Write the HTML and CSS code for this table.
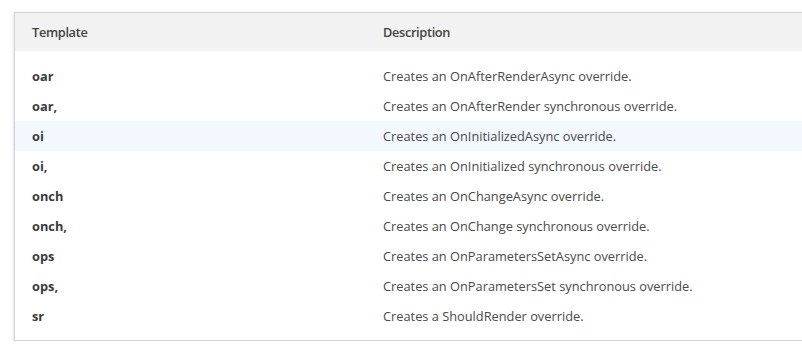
FILE: index.html
```html
<!DOCTYPE html>
<html>
<head>
<meta charset="utf-8">
<link rel="stylesheet" href="styles.css">
</head>
<body>
<div class="card">
  <div class="row head">
    <div class="cell">Template</div>
    <div class="cell">Description</div>
  </div>
  <div class="body">
    <div class="row"><div class="cell key">oar</div><div class="cell">Creates an OnAfterRenderAsync override.</div></div>
    <div class="row"><div class="cell key">oar,</div><div class="cell">Creates an OnAfterRender synchronous override.</div></div>
    <div class="row hl"><div class="cell key">oi</div><div class="cell">Creates an OnInitializedAsync override.</div></div>
    <div class="row"><div class="cell key">oi,</div><div class="cell">Creates an OnInitialized synchronous override.</div></div>
    <div class="row"><div class="cell key">onch</div><div class="cell">Creates an OnChangeAsync override.</div></div>
    <div class="row"><div class="cell key">onch,</div><div class="cell">Creates an OnChange synchronous override.</div></div>
    <div class="row"><div class="cell key">ops</div><div class="cell">Creates an OnParametersSetAsync override.</div></div>
    <div class="row"><div class="cell key">ops,</div><div class="cell">Creates an OnParametersSet synchronous override.</div></div>
    <div class="row"><div class="cell key">sr</div><div class="cell">Creates a ShouldRender override.</div></div>
  </div>
</div>
</body>
</html>
```
FILE: styles.css
```css
html, body {
  margin: 0;
  padding: 0;
  background: #fff;
  overflow: hidden;
}
body {
  padding: 12px 0 0 14px;
  font-family: "Open Sans", "Noto Sans", sans-serif;
  font-size: 12.8px;
  color: #4a4a4a;
}
.card {
  width: 820px;
  border: 1px solid #d4d4d4;
  border-right: none;
  box-shadow: 0 1px 3px rgba(0,0,0,0.18);
  background: #fff;
}
.row {
  display: grid;
  grid-template-columns: 351px 1fr;
  height: 30px;
  align-items: center;
}
.cell {
  padding-left: 17px;
  white-space: nowrap;
}
.head {
  height: 38px;
  background: #f2f2f2;
  font-weight: 600;
  color: #444;
  letter-spacing: -0.35px;
}
.body {
  padding: 10px 0 9px;
}
.key {
  font-weight: 700;
  color: #3a3a3a;
}
.hl {
  background: #f2f8fd;
}
```
